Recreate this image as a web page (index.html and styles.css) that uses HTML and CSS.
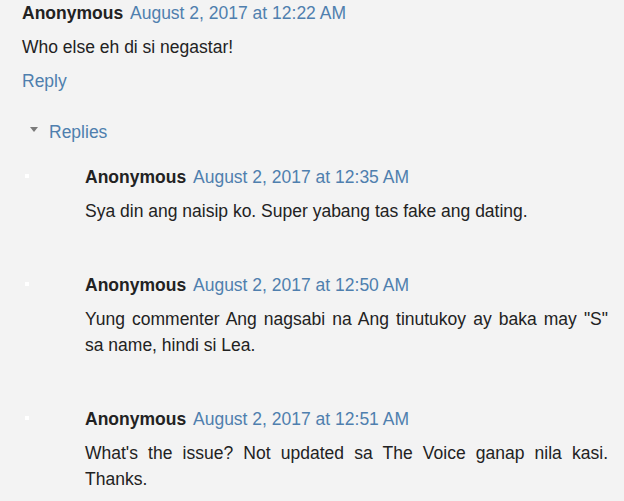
FILE: index.html
```html
<!DOCTYPE html>
<html lang="en">
<head>
    <meta charset="UTF-8">
    <title>Comments</title>
    <link rel="stylesheet" href="styles.css">
</head>
<body>
    <div class="comment top">
        <div class="comment-header">
            <span class="user">Anonymous</span>
            <a class="date" href="#">August 2, 2017 at 12:22 AM</a>
        </div>
        <p class="comment-body">Who else eh di si negastar!</p>
        <a class="reply" href="#">Reply</a>
    </div>

    <div class="thread">
        <div class="thread-toggle">
            <span class="arrow"></span>
            <a href="#">Replies</a>
        </div>

        <div class="replies">
            <div class="comment nested">
                <div class="avatar"></div>
                <div class="comment-main">
                    <div class="comment-header">
                        <span class="user">Anonymous</span>
                        <a class="date" href="#">August 2, 2017 at 12:35 AM</a>
                    </div>
                    <p class="comment-body">Sya din ang naisip ko. Super yabang tas fake ang dating.</p>
                </div>
            </div>

            <div class="comment nested">
                <div class="avatar"></div>
                <div class="comment-main">
                    <div class="comment-header">
                        <span class="user">Anonymous</span>
                        <a class="date" href="#">August 2, 2017 at 12:50 AM</a>
                    </div>
                    <p class="comment-body">Yung commenter Ang nagsabi na Ang tinutukoy ay baka may "S" sa name, hindi si Lea.</p>
                </div>
            </div>

            <div class="comment nested">
                <div class="avatar"></div>
                <div class="comment-main">
                    <div class="comment-header">
                        <span class="user">Anonymous</span>
                        <a class="date" href="#">August 2, 2017 at 12:51 AM</a>
                    </div>
                    <p class="comment-body">What's the issue? Not updated sa The Voice ganap nila kasi. Thanks.</p>
                </div>
            </div>
        </div>
    </div>
</body>
</html>
```

FILE: styles.css
```css
body {
    margin: 0;
    padding: 0 13px 0 22px;
    background: #f3f3f3;
    color: #222;
    font-family: 'Liberation Sans', Arial, sans-serif;
    font-size: 17.5px;
    line-height: 26px;
}
a {
    color: #4f7fae;
    text-decoration: none;
}
.comment-header {
    height: 26px;
    white-space: nowrap;
}
.user {
    font-weight: bold;
    color: #222;
}
.date {
    margin-left: 2px;
}
.comment-body {
    margin: 8px 0 0;
    text-align: justify;
}
.reply {
    display: inline-block;
    margin-top: 8px;
}
.thread {
    margin-top: 25px;
}
.thread-toggle {
    display: flex;
    align-items: center;
    padding-left: 8px;
}
.arrow {
    width: 0;
    height: 0;
    border-left: 4px solid transparent;
    border-right: 4px solid transparent;
    border-top: 5px solid #7a7a7a;
    margin: -6px 11px 0 0;
}
.replies {
    display: flex;
    flex-direction: column;
    gap: 48px;
    margin-top: 19px;
}
.nested {
    display: flex;
}
.avatar {
    flex: 0 0 63px;
}
.avatar::before {
    content: "";
    display: block;
    width: 4px;
    height: 4px;
    margin: 10px 0 0 3px;
    background: #fff;
}
.comment-main {
    flex: 1;
    padding-right: 3px;
}
```
